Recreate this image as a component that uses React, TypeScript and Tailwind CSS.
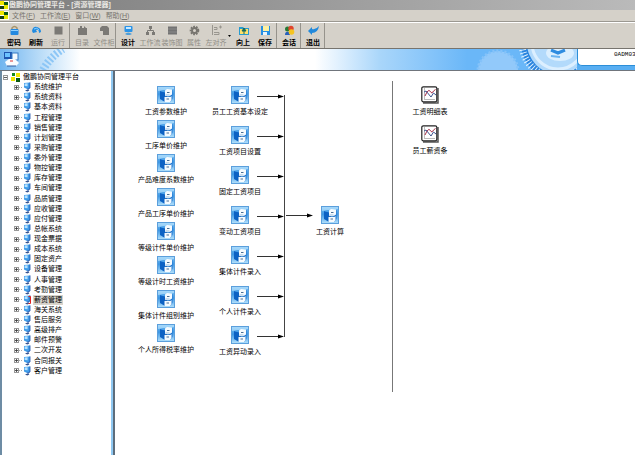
import type { ReactNode } from "react";

const modules = [
  "系统维护", "系统资料", "基本资料", "工程管理", "销售管理", "计划管理", "采购管理", "委外管理",
  "物控管理", "库存管理", "车间管理", "品质管理", "应收管理", "应付管理", "总帐系统", "现金票据",
  "成本系统", "固定资产", "设备管理", "人事管理", "考勤管理", "薪资管理", "海关系统", "售后服务",
  "高级排产", "邮件预警", "二次开发", "合同报关", "客户管理",
];
const setup = [
  "工资参数维护", "工序单价维护", "产品难度系数维护", "产品工序单价维护",
  "等级计件单价维护", "等级计时工资维护", "集体计件组别维护", "个人所得税率维护",
];
const entries = [
  "员工工资基本设定", "工资项目设置", "固定工资项目", "变动工资项目",
  "集体计件录入", "个人计件录入", "工资异动录入",
];

function Logo() {
  return (
    <svg viewBox="0 0 9 9" className="h-[9px] w-[9px] shrink-0" aria-hidden="true">
      <rect width="9" height="9" fill="#fffef0" />
      <rect width="4" height="4" fill="#f0e800" />
      <rect x="4" y="1" width="4" height="3" fill="#0b5a12" />
      <rect x="0" y="5" width="4" height="3" fill="#123c10" />
      <rect x="4" y="4" width="4" height="4" fill="#e6e800" />
    </svg>
  );
}

function TreeLogo() {
  return (
    <svg viewBox="0 0 9 9" className="h-[9px] w-[9px] shrink-0" aria-hidden="true">
      <rect x="1" width="3" height="3" fill="#148a1c" />
      <rect x="5" width="4" height="4" fill="#f0e800" />
      <rect y="4" width="4" height="4" fill="#f0e800" />
      <rect x="5" y="5" width="4" height="4" fill="#0b5a12" />
    </svg>
  );
}

function Expander({ open = false }: { open?: boolean }) {
  return (
    <svg viewBox="0 0 5 5" className="h-[5px] w-[5px] shrink-0" aria-hidden="true">
      <rect x=".5" y=".5" width="4" height="4" fill="#fff" stroke="#999" />
      <path d={open ? "M1 2.5h3" : "M1 2.5h3M2.5 1v3"} stroke="#333" strokeWidth=".8" />
    </svg>
  );
}

function Monitor({ active = false }: { active?: boolean }) {
  return (
    <svg viewBox="0 0 8 10" className="h-[10px] w-[8px] shrink-0" aria-hidden="true">
      <path d="M1 1l6-.6v5.800L4 7 1 5.600z" fill="#3f9be8" />
      <path d="M1.600 1.600l3-.3v3L1.600 4z" fill="#b7e2ff" />
      <path d="M7 .4v5.600L4.500 7 6 8.200" fill="none" stroke="#1c4fa8" strokeWidth=".8" />
      <path d="M2 8.400l2.500-1 2 1-2.300 1.200z" fill="#35528f" />
      {active && <path d="M5.500 1.500h2v7h-2" fill="none" stroke="#e02020" />}
    </svg>
  );
}

function Cabinet() {
  return (
    <svg viewBox="0 0 18 18" className="h-[18px] w-[18px] shrink-0" aria-hidden="true">
      <defs>
        <linearGradient id="cab" x1="0" y1="0" x2="0" y2="1">
          <stop offset="0" stopColor="#7cc4f6" />
          <stop offset=".45" stopColor="#3c96e4" />
          <stop offset="1" stopColor="#b4e2fc" />
        </linearGradient>
      </defs>
      <rect x=".5" y=".5" width="17" height="17" fill="url(#cab)" stroke="#5b9fdc" />
      <path d="M1 1h16v2L1 5z" fill="#c2e6fd" opacity=".6" />
      <path d="M3 5l5 1v10l-5-3z" fill="#0d62c4" />
      <path d="M3 5l4-1 3 1-2 1.500z" fill="#4fa4ea" />
      <path d="M8 6h2v10H8z" fill="#0a4fa8" />
      <path d="M14 5l1.500-1v9L13 16h-3z" fill="#1f74cf" />
      <path d="M8 4.500L10 3l5 .5v5L13 10H8z" fill="#f6fbff" />
      <path d="M7.500 11h6l1-1v4l-1.500 2h-5.500z" fill="#f6fbff" />
      <path d="M8 10.200h6" stroke="#4b8ccc" strokeWidth=".8" />
      <path d="M10 6.500h2.500M9.500 13h2.500" stroke="#4a6f94" />
      <path d="M8.500 8.500h4" stroke="#bcd5ea" strokeWidth=".8" />
    </svg>
  );
}

function Report() {
  return (
    <svg viewBox="0 0 18 18" className="h-[18px] w-[18px] shrink-0" aria-hidden="true">
      <path d="M2 17h15V2" fill="none" stroke="#555" strokeWidth="1.500" />
      <rect x=".8" y=".8" width="15" height="15" rx="1.500" fill="#fff" stroke="#222" strokeWidth="1.200" />
      <path d="M3.500 2.500v11H14" stroke="#777" fill="none" strokeDasharray="1 1" />
      <path d="M4 10l2-4q2-3 3.500-.5t2 1 3-3" fill="none" stroke="#a82d46" />
      <path d="M3 6l2-1 5 6 2.500-4 2.500 2" fill="none" stroke="#3d5490" />
    </svg>
  );
}

function Node({ label, children }: { label: string; children: ReactNode }) {
  return (
    <button className="flex w-[60px] flex-col items-center gap-[3px] whitespace-nowrap leading-[9px]">
      {children}
      <span>{label}</span>
    </button>
  );
}

const glyphs: Record<string, ReactNode> = {
  密码: <><path d="M3 5V3q2.500-3 5 0v2" fill="none" stroke="#a8946a" strokeWidth="1.500" /><rect x="1.500" y="4" width="8" height="6" rx="1" fill="#2389e0" /><path d="M2 5.500h7" stroke="#8fd0ff" /></>,
  刷新: <><path d="M1 6q1-5 5-4 4 1 4 5L8 8Q8 4 5 5l1 2-4 1z" fill="#218be0" /><path d="M3 4q3-2 5 1" stroke="#8bd0ff" fill="none" /></>,
  运行: <rect x="1.500" y="1.500" width="8" height="8" fill="#7b7975" />,
  目录: <path d="M1 3h2V1h2v2h2V1l2 2h1v7H1z" fill="#7b7975" />,
  文件柜: <path d="M1 3l2-2h5l2 2v7H4V6H1z" fill="#7b7975" />,
  设计: <><rect x="1.500" y="1" width="8" height="6" rx="1" fill="#2b94e8" /><path d="M3 3h5" stroke="#c9eaff" strokeWidth="2" /><path d="M2 9q3-3 7 0l-2 1H4z" fill="#4d9ed9" /></>,
  工作流: <><path d="M4 1h3v3H4zM1 7h3v3H1zM7 7h3v3H7z" fill="#7b7975" /><path d="M5.500 4v2M2.500 7V5.500h6V7" stroke="#7b7975" fill="none" /></>,
  装饰图: <><rect x="1" y="1.500" width="9" height="8" fill="#737373" /><path d="M1 4h9M1 7h9" stroke="#929292" strokeWidth=".7" /></>,
  属性: <><circle cx="5.500" cy="5.500" r="3.800" fill="none" stroke="#77756f" strokeWidth="2" strokeDasharray="1.700 1" /><circle cx="5.500" cy="5.500" r="2.500" fill="none" stroke="#77756f" strokeWidth="2" /></>,
  左对齐: <path d="M1.500 0v10M3 2.500h3v2H3M3 7.500h5v2H3M8 2h3M9.500 .5v3" fill="none" stroke="#99968f" />,
  向上: <><path d="M1 2h4l1 1h5v7H1z" fill="#269bd0" /><path d="M2 4h8v5H2z" fill="#ffe26a" /><path d="M6 9V5M4 6l2-3 2 3z" fill="#176b5e" stroke="#176b5e" /></>,
  保存: <><rect x="1" y="1" width="9" height="9" fill="#268fe3" /><rect x="3" y="1" width="6" height="5" fill="#fff1a0" /><rect x="3" y="7" width="4" height="3" fill="#e9f4fc" /></>,
  会话: <><circle cx="3.500" cy="4" r="2.500" fill="#267b36" /><circle cx="7" cy="3.500" r="2.700" fill="#e0442c" /><path d="M1 10q0-4 4-3l1 3z" fill="#2860bc" /><circle cx="7.500" cy="7" r="2.800" fill="#f5c420" /></>,
  退出: <path d="M0 6l4-4v2q4 1 7-3-1 7-7 7v2z" fill="#2189dc" />,
};

function Tool({ label, disabled = false }: { label: string; disabled?: boolean }) {
  return (
    <button
      disabled={disabled}
      className="flex w-[22px] shrink-0 flex-col items-center gap-[2px] whitespace-nowrap pt-[2px] font-bold leading-[9px] text-black disabled:font-normal disabled:text-[#918e87]"
    >
      <svg viewBox="0 0 11 11" className="h-[11px] w-[11px]" aria-hidden="true">{glyphs[label]}</svg>
      <span>{label}</span>
    </button>
  );
}

const Separator = () => <div className="mr-px h-full w-px shrink-0 bg-[#96938c]" />;

function Gears() {
  return (
    <svg viewBox="0 0 110 21" className="h-[21px] w-[110px] shrink-0" aria-hidden="true">
      <rect width="110" height="21" fill="#6ab7f8" />
      <circle cx="31" cy="22" r="20" fill="#92c9fa" />
      <circle cx="31" cy="22" r="20" fill="none" stroke="#84c2f9" strokeWidth="3" strokeDasharray="2 2" />
      <circle cx="91" cy="-6" r="37" fill="#2a84de" />
      <circle cx="89" cy="-6" r="34" fill="none" stroke="#e2f2ff" strokeWidth="7" strokeDasharray="1 2" />
      <circle cx="91" cy="-6" r="31" fill="#b3dafb" />
      <circle cx="91" cy="-6" r="26" fill="none" stroke="#dcefff" strokeWidth="3" />
      <ellipse cx="93" cy="4" rx="14" ry="8" fill="#dceffe" />
      <path d="M84 1l7 3 7-3" stroke="#2f8ce0" strokeWidth="3" fill="none" />
      <path d="M84 7l9 1" stroke="#6db4f0" strokeWidth="2" fill="none" />
    </svg>
  );
}

export default function App() {
  return (
    <div className="flex min-h-screen flex-col overflow-hidden bg-white font-['Liberation_Sans','Noto_Sans_CJK_SC',sans-serif] text-[7px] text-black">
      <header className="flex flex-col bg-[#d5d1c9]">
        <h1 className="flex h-[10px] items-center whitespace-pre bg-linear-to-r from-[#7d7d7d] to-[#bababa] text-[7px] font-bold leading-[10px] text-[#e9e7e3]">
          <Logo />傲鹏协同管理平台 - [资源管理器]
        </h1>
        <nav className="flex h-[12px] items-center gap-[5px] border-b border-[#9b9891] leading-[10px] text-[#77746e]">
          <div className="flex items-center gap-[3px]">
            <Logo />
            <button>文件(<u>F</u>)</button>
          </div>
          <button>工作流(<u>E</u>)</button>
          <button>窗口(<u>W</u>)</button>
          <button>帮助(<u>H</u>)</button>
        </nav>
        <div className="flex h-[27px] border-b border-t border-b-[#77746e] border-t-white pl-[3px]">
          <Tool label="密码" />
          <Tool label="刷新" />
          <Tool label="运行" disabled />
          <Separator />
          <Tool label="目录" disabled />
          <Tool label="文件柜" disabled />
          <Separator />
          <Tool label="设计" />
          <Tool label="工作流" disabled />
          <Tool label="装饰图" disabled />
          <Tool label="属性" disabled />
          <Tool label="左对齐" disabled />
          <button aria-label="对齐方式" className="flex w-[5px] shrink-0 items-center justify-center">
            <svg viewBox="0 0 3 2" className="h-[2px] w-[3px]"><path d="M0 0h3L1.500 2z" /></svg>
          </button>
          <Tool label="向上" />
          <Tool label="保存" />
          <Separator />
          <Tool label="会话" />
          <Separator />
          <Tool label="退出" />
          <Separator />
        </div>
      </header>

      <div className="flex h-[22px] justify-between border-b border-[#70757c] bg-white">
        <div className="flex w-[80px] shrink-0 items-center bg-linear-to-r from-[#70b5ef] via-[#b9dcf8] to-white pl-[3px]">
          <svg viewBox="0 0 77 21" className="h-[21px] w-[77px]" aria-hidden="true">
            <rect x="1" y="3" width="8" height="7" fill="#1f55ae" />
            <rect x="2" y="4" width="5" height="4" fill="#6cc2ff" />
            <rect x="9" y="4" width="6" height="7" fill="#f3faff" stroke="#347ac5" />
            <path d="M2 13l4-3h6l4 4-3 3H4z" fill="#f9fcff" />
            <path d="M4 17h9" stroke="#2c5aa0" />
            <path d="M7 12h3" stroke="#d33" />
            <path d="M40 21Q47 8 60 0" fill="none" stroke="#8cc6f6" strokeWidth="8" strokeDasharray="2 2" />
          </svg>
        </div>
        <div className="flex w-[385px] shrink-0">
          <div className="grow bg-linear-to-r from-white from-30% via-[#a9d6fa] via-60% to-[#6ab7f8]" />
          <Gears />
          <div className="w-[58px] bg-[#58aef2] pb-[4px]">
            <div className="h-full overflow-hidden whitespace-nowrap rounded-bl-[5px] border-b border-l border-[#2b8ed8] bg-white pl-[36px] font-['Liberation_Mono',monospace] text-[6px] leading-[12px]">
              0ADM03
            </div>
          </div>
        </div>
      </div>

      <div className="flex grow">
        <aside className="w-[115px] shrink-0 border-l-2 border-r-2 border-l-[#6d8ca4] border-r-[#5d6d7c]">
          <div className="h-full border-r-2 border-[#8fc8f2] pt-px">
            <ul className="flex h-[304px] flex-col justify-between leading-[10px]">
              <li className="flex h-[10px] items-center gap-[3px] whitespace-nowrap pl-px">
                <Expander open />
                <TreeLogo />
                <button>傲鹏协同管理平台</button>
              </li>
              {modules.map((name) => (
                <li key={name} className="flex h-[10px] items-center whitespace-nowrap pl-[12px]">
                  <Expander />
                  <div className="mr-px w-[3px] border-t border-dotted border-[#aaa]" />
                  <Monitor active={name === "薪资管理"} />
                  <button className={`ml-[2px] px-px ${name === "薪资管理" ? "bg-[#d8d4cc]" : ""}`}>{name}</button>
                </li>
              ))}
            </ul>
          </div>
        </aside>

        <main className="relative flex grow items-start pl-[21px] pt-[15px]">
          <div className="flex flex-col gap-[4px]">
            {setup.map((name) => <Node key={name} label={name}><Cabinet /></Node>)}
          </div>
          <div className="ml-[14px] flex flex-col gap-[10px]">
            {entries.map((name) => <Node key={name} label={name}><Cabinet /></Node>)}
          </div>
          <svg viewBox="0 0 56 250" className="pointer-events-none absolute left-[142px] top-[21px] h-[250px] w-[56px]" aria-hidden="true">
            <path d="M27.500 3v242" stroke="#444" />
            {entries.map((name, i) => (
              <g key={name} transform={`translate(0 ${i * 40})`}>
                <path d="M0 4.500h23" stroke="#333" />
                <path d="M21 2.500l6 2-6 2z" />
              </g>
            ))}
            <path d="M29 123.500h23" stroke="#333" />
            <path d="M50 121.500l6 2-6 2z" />
          </svg>
          <div className="ml-[30px] mt-[120px]">
            <Node label="工资计算"><Cabinet /></Node>
          </div>
          <div className="-mt-[5px] ml-[32px] h-[311px] w-px shrink-0 bg-[#777]" />
          <div className="ml-[7px] flex flex-col gap-[9px]">
            <Node label="工资明细表"><Report /></Node>
            <Node label="员工薪资条"><Report /></Node>
          </div>
        </main>
      </div>
    </div>
  );
}
